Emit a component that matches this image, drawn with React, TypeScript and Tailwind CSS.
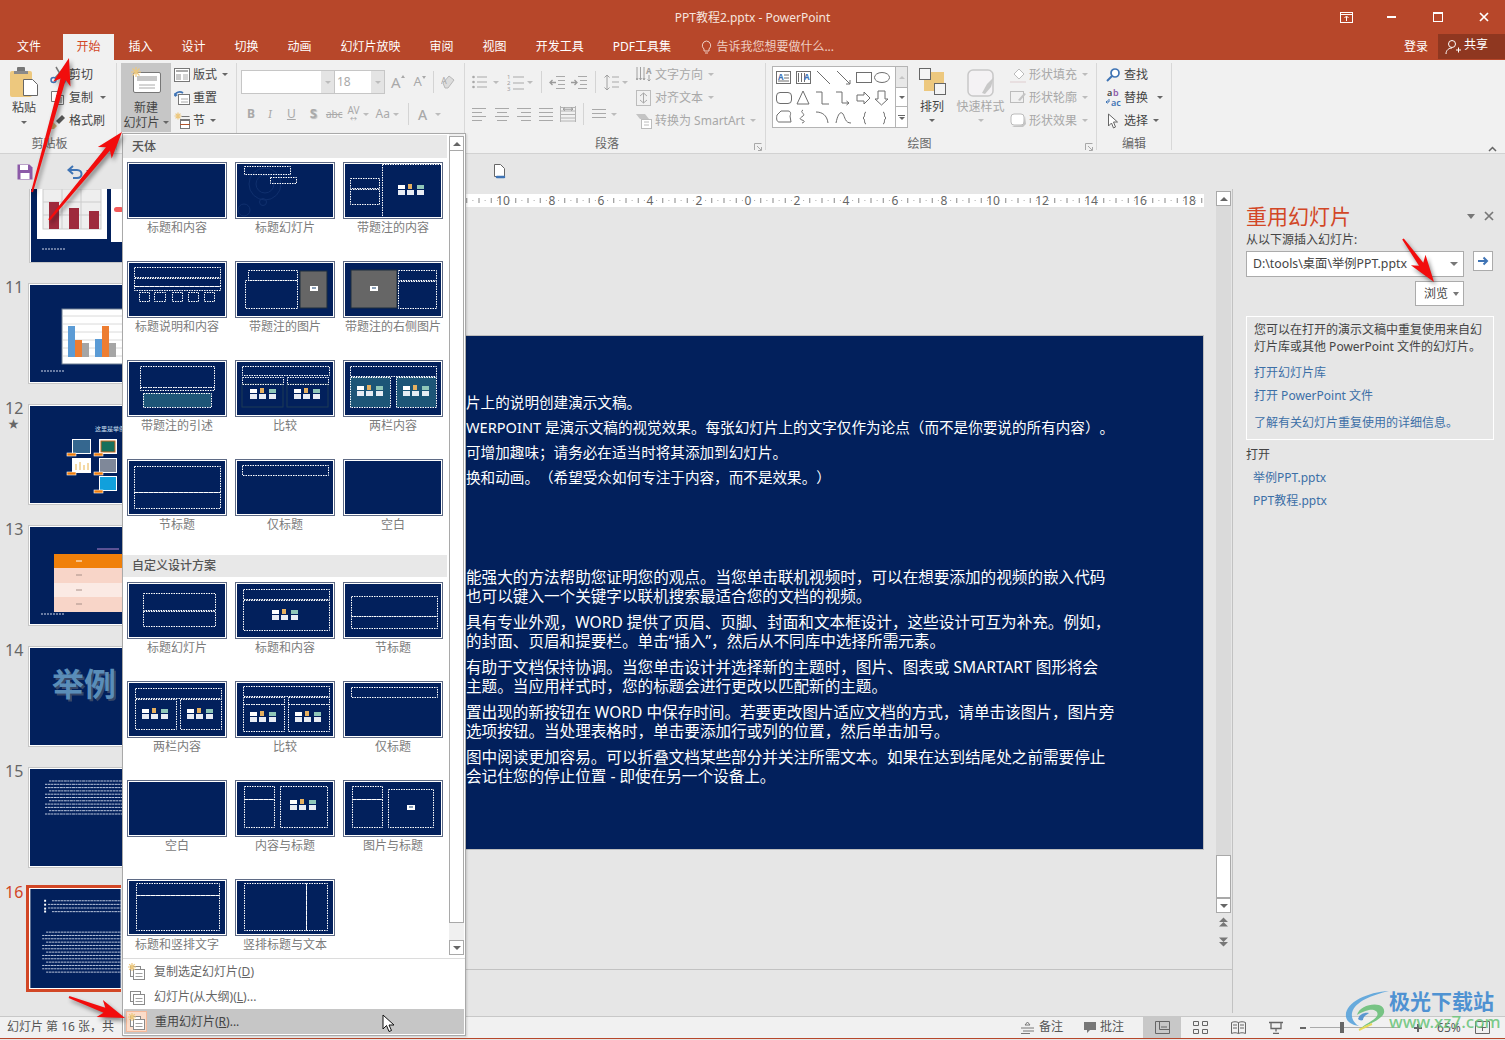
import React from "react";

const NAVY = "#02205c";

const Caret = ({ cls = "border-t-[#666]", className = "" }: { cls?: string; className?: string }) => (
  <span className={`inline-block w-0 h-0 border-x-[3px] border-x-transparent border-t-[3px] ${cls} ${className}`} />
);

const Svg = ({ w, h, children, className = "" }: { w: number; h: number; children?: React.ReactNode; className?: string }) => (
  <svg width={w} height={h} viewBox={`0 0 ${w} ${h}`} fill="none" className={`shrink-0 block ${className}`}>
    {children}
  </svg>
);

const Star = ({ x = 0, y = 0, r = 5 }: { x?: number; y?: number; r?: number }) => (
  <g stroke="#edc87e" strokeWidth="1.2">
    <path d={`M${x - r} ${y}H${x + r}M${x} ${y - r}V${y + r}M${x - r * 0.7} ${y - r * 0.7}L${x + r * 0.7} ${y + r * 0.7}M${x + r * 0.7} ${y - r * 0.7}L${x - r * 0.7} ${y + r * 0.7}`} />
  </g>
);

// text-alignment style glyph made of short strokes
const Lines = ({ w = 15, ys = [2, 6, 10, 14], xs }: { w?: number; ys?: number[]; xs?: [number, number][] }) => (
  <Svg w={w} h={16}>
    {ys.map((y, i) => (
      <rect key={i} x={xs ? xs[i][0] : 0} y={y} width={xs ? xs[i][1] : w} height="1" fill="#a9a9a9" />
    ))}
  </Svg>
);

const BulletIcon = () => (
  <Svg w={15} h={16}>
    <circle cx="1.500" cy="3" r="1.300" fill="#a9a9a9" />
    <circle cx="1.500" cy="8" r="1.300" fill="#a9a9a9" />
    <circle cx="1.500" cy="13" r="1.300" fill="#a9a9a9" />
    <path d="M5 3h10M5 8h10M5 13h10" stroke="#a9a9a9" />
  </Svg>
);

const NumberIcon = () => (
  <Svg w={17} h={18}>
    <g fontSize="6" fill="#a0a0a0">
      <text x="0" y="6">1</text>
      <text x="0" y="12">2</text>
      <text x="0" y="18">3</text>
    </g>
    <path d="M6 4h11M6 10h11M6 16h11" stroke="#a9a9a9" />
  </Svg>
);

const IndentIcon = ({ out }: { out?: boolean }) => (
  <Svg w={16} h={15}>
    <path d="M7 1.500h9M9 5.500h7M9 9.500h7M7 13.500h9M0 1.500" stroke="#a9a9a9" />
    <path d={out ? "M7 7.500H1M3.500 5L1 7.500 3.500 10" : "M0 7.500h6M3.500 5L6 7.500 3.500 10"} stroke="#9a9a9a" strokeWidth="1.300" />
  </Svg>
);

const LineSpacingIcon = () => (
  <Svg w={15} h={17}>
    <path d="M3 1v15M.5 3.500L3 1l2.500 2.500M.5 13.500L3 16l2.500-2.500" stroke="#a0a0a0" />
    <path d="M8 3h7M8 8h7M8 13h7" stroke="#a9a9a9" />
  </Svg>
);

const TextDirIcon = () => (
  <Svg w={16} h={17}>
    <path d="M1 1v13M4.500 1v13M8 1v13M.0 12l1 2 1-2M3.500 12l1 2 1-2M7 12l1 2 1-2" stroke="#a0a0a0" />
    <text x="10" y="8" fontSize="8" fontWeight="700" fill="#a0a0a0">A</text>
    <path d="M13 9v6M11.500 13.500l1.500 1.500 1.500-1.500" stroke="#a0a0a0" />
  </Svg>
);

type Rect = [number, number, number, number];
type Layout = { name: string; d?: Rect[]; solid?: Rect[]; gray?: Rect; teal?: Rect[]; pics?: [number, number][]; tiny?: [number, number]; rings?: boolean };

const PicTiles = ({ x, y }: { x: number; y: number }) => (
  <g>
    <rect x={x} y={y} width="7" height="4" fill="#fff" />
    <rect x={x + 10} y={y - 1} width="4" height="5" fill="#e6b060" />
    <rect x={x + 19} y={y} width="7" height="4" fill="#8fc6b8" />
    <rect x={x} y={y + 5} width="7" height="5" fill="#e8ecf4" />
    <rect x={x + 9} y={y + 5} width="7" height="5" fill="#e8ecf4" />
    <rect x={x + 19} y={y + 5} width="7" height="5" fill="#e8ecf4" />
  </g>
);

const LayoutThumb = ({ l }: { l: Layout }) => (
  <svg width="100" height="57" viewBox="0 0 100 57" className="block">
    <rect x="0.5" y="0.5" width="99" height="56" fill="#fff" stroke="#5f6b85" />
    <rect x="2" y="2" width="96" height="53" fill={NAVY} />
    {l.rings && (
      <g stroke="#10306e" fill="none">
        <circle cx="30" cy="22" r="16" />
        <circle cx="30" cy="22" r="9" />
        <circle cx="9" cy="48" r="6" />
        <circle cx="28" cy="40" r="3.5" />
      </g>
    )}
    {l.gray && <rect x={l.gray[0]} y={l.gray[1]} width={l.gray[2]} height={l.gray[3]} fill="#666" stroke="#1c2c3c" />}
    {l.teal?.map((r, i) => <rect key={i} x={r[0]} y={r[1]} width={r[2]} height={r[3]} fill="#1d5577" />)}
    {l.solid?.map((r, i) => <rect key={i} x={r[0]} y={r[1]} width={r[2]} height={r[3]} stroke="#1d3a55" fill="none" />)}
    {l.d?.map((r, i) => (
      <rect key={i} x={r[0] + 0.5} y={r[1] + 0.5} width={r[2]} height={r[3]} stroke="#fff" strokeDasharray="1.5 1" fill="none" />
    ))}
    {l.pics?.map((p, i) => <PicTiles key={i} x={p[0]} y={p[1]} />)}
    {l.tiny && (
      <g>
        <rect x={l.tiny[0]} y={l.tiny[1]} width="8" height="5" fill="#fff" />
        <rect x={l.tiny[0] + 2} y={l.tiny[1] + 1} width="4" height="2" fill="#8aa0b8" />
      </g>
    )}
  </svg>
);

const themeLayouts: Layout[] = [
  { name: "标题和内容" },
  { name: "标题幻灯片", d: [[9, 4, 46, 8], [35, 15, 26, 6]], rings: true },
  { name: "带题注的内容", d: [[39, 2, 59, 53], [7, 16, 29, 10], [7, 27, 29, 15]], pics: [[55, 23]] },
  { name: "标题说明和内容", d: [[7, 6, 86, 10], [7, 17, 86, 8], [7, 25, 86, 4], [12, 31, 10, 9], [27, 31, 11, 9], [45, 31, 10, 9], [61, 31, 10, 9], [77, 31, 10, 9]] },
  { name: "带题注的图片", gray: [65, 10, 27, 37], d: [[13, 9, 49, 10], [10, 19, 52, 28]], tiny: [75, 25] },
  { name: "带题注的右侧图片", gray: [8, 9, 46, 38], d: [[55, 9, 38, 10], [55, 20, 38, 27]], tiny: [27, 25] },
  { name: "带题注的引述", teal: [[16, 33, 68, 14]], d: [[13, 6, 74, 21], [13, 27, 74, 3], [16, 33, 68, 14]] },
  { name: "比较", solid: [[7, 24, 41, 23], [52, 24, 41, 23]], d: [[7, 6, 87, 9], [7, 17, 41, 7], [52, 17, 41, 7]], pics: [[15, 29], [59, 29]] },
  { name: "两栏内容", teal: [[7, 17, 40, 30], [53, 17, 40, 30]], d: [[7, 6, 86, 10], [7, 17, 40, 30], [53, 17, 40, 30]], pics: [[14, 26], [60, 26]] },
  { name: "节标题", d: [[7, 7, 86, 26], [7, 33, 86, 16]] },
  { name: "仅标题", d: [[7, 6, 86, 10]] },
  { name: "空白" },
];

const customLayouts: Layout[] = [
  { name: "标题幻灯片", d: [[16, 11, 72, 17], [16, 29, 72, 15]] },
  { name: "标题和内容", d: [[8, 7, 86, 10], [8, 18, 86, 30]], pics: [[37, 28]] },
  { name: "节标题", d: [[8, 14, 86, 20], [8, 34, 86, 12]] },
  { name: "两栏内容", d: [[8, 7, 86, 10], [8, 18, 41, 30], [53, 18, 41, 30]], pics: [[15, 28], [60, 28]] },
  { name: "比较", d: [[8, 5, 86, 10], [8, 16, 41, 7], [53, 16, 41, 7], [8, 23, 41, 27], [53, 23, 41, 27]], pics: [[15, 31], [60, 31]] },
  { name: "仅标题", d: [[8, 6, 86, 10]] },
  { name: "空白" },
  { name: "内容与标题", d: [[9, 6, 30, 13], [9, 19, 30, 28], [45, 6, 47, 41]], pics: [[55, 20]] },
  { name: "图片与标题", d: [[9, 6, 30, 13], [9, 19, 30, 28], [45, 9, 45, 38]], tiny: [64, 25] },
  { name: "标题和竖排文字", d: [[9, 4, 83, 12], [9, 16, 83, 35]] },
  { name: "竖排标题与文本", d: [[9, 4, 62, 47], [71, 4, 21, 47]] },
];

const LayoutGrid = ({ items }: { items: Layout[] }) => (
  <div className="grid grid-cols-[100px_100px_100px] gap-x-[8px] gap-y-[22px] pl-[4px]">
    {items.map((l, i) => (
      <div key={i} className="h-[77px]">
        <LayoutThumb l={l} />
        <div className="text-center text-[12px] leading-[18px] text-[#7b7b7b] whitespace-nowrap">{l.name}</div>
      </div>
    ))}
  </div>
);

const menuFooterIcon = (star: boolean) => (
  <Svg w={18} h={18}>
    <rect x="2.5" y="3.5" width="10" height="10" fill="#fff" stroke="#8a8a8a" />
    <rect x="5.5" y="6.5" width="11" height="10" fill="#fff" stroke="#8a8a8a" />
    <path d="M7.5 10.5h7M7.5 13.5h7" stroke="#a0a0a0" />
    {star && <Star x={4} y={4} r={4} />}
  </Svg>
);

const LayoutMenu = () => (
  <div className="absolute left-[122px] top-[133px] w-[344px] h-[903px] bg-white border border-[#a9a9a9] flex flex-col shadow-[1px_1px_2px_rgba(0,0,0,0.15)]">
    <div className="flex h-[824px]">
      <div className="w-[326px] pt-px">
        <div className="h-[23px] mr-[2px] bg-[#e8e8e8] text-[12px] leading-[23px] text-[#555] font-medium pl-[9px]">天体</div>
        <div className="mt-[4px]">
          <LayoutGrid items={themeLayouts} />
        </div>
        <div className="mt-[19px] h-[22px] mr-[2px] bg-[#e8e8e8] text-[12px] leading-[22px] text-[#555] font-medium pl-[9px]">自定义设计方案</div>
        <div className="mt-[5px]">
          <LayoutGrid items={customLayouts} />
        </div>
      </div>
      <div className="w-[15px] pt-[2px] flex flex-col bg-[#f0f0f0] h-[821px]">
        <div className="h-[15px] border border-[#a9a9a9] bg-white flex items-center justify-center">
          <span className="w-0 h-0 border-x-[4px] border-x-transparent border-b-[4px] border-b-[#666]" />
        </div>
        <div className="h-[772px] border-x border-b border-[#a9a9a9] bg-white" />
        <div className="h-[15px] mt-[17px] border border-[#a9a9a9] bg-white flex items-center justify-center">
          <span className="w-0 h-0 border-x-[4px] border-x-transparent border-t-[4px] border-t-[#666]" />
        </div>
      </div>
    </div>
    <div className="border-t border-[#dcdcdc] text-[12px] text-[#666]">
      <div className="h-[25px] flex items-center pl-[5px]">
        {menuFooterIcon(true)}
        <span className="ml-[8px]">复制选定幻灯片(<u>D</u>)</span>
      </div>
      <div className="h-[25px] flex items-center pl-[5px]">
        {menuFooterIcon(false)}
        <span className="ml-[8px]">幻灯片(从大纲)(<u>L</u>)...</span>
      </div>
      <div className="h-[25px] mx-px flex items-center pl-[2px] bg-[#c6c6c6] text-[#444]">
        <span className="w-[21px] h-[21px] bg-[#fbdcc9] border border-[#f4b99a] flex items-center justify-center">{menuFooterIcon(true)}</span>
        <span className="ml-[8px]">重用幻灯片(<u>R</u>)...</span>
      </div>
    </div>
  </div>
);

// ribbon row: small icon plus label
const Row = ({ icon, label, caret, off, iconW = "w-[19px]", caretMl = "ml-[5px]" }: { icon: React.ReactNode; label: string; caret?: boolean; off?: boolean; iconW?: string; caretMl?: string }) => (
  <div className={`flex items-center h-[23px] whitespace-nowrap ${off ? "text-[#a8a8a8]" : "text-[#444]"}`}>
    <span className={`${iconW} shrink-0 flex items-center`}>{icon}</span>
    <span>{label}</span>
    {caret && <Caret className={caretMl} cls={off ? "border-t-[#bcbcbc]" : "border-t-[#666]"} />}
  </div>
);

const Launcher = ({ className = "" }: { className?: string }) => (
  <Svg w={8} h={8} className={className}>
    <path d="M.5 7V.5H7.5M3 3l4 4M7.5 4v3.5H4" stroke="#a8a8a8" />
  </Svg>
);

const Group = ({ w, label, labelCls = "text-center", children, launcher }: { w: string; label?: string; labelCls?: string; children: React.ReactNode; launcher?: boolean }) => (
  <div className={`${w} h-[87px] border-r border-[#d8d8d8] shrink-0`}>
    <div className="h-[72px] flex">{children}</div>
    <div className="flex items-center h-[18px]">
      <div className={`flex-1 text-[12px] leading-[18px] text-[#666] ${labelCls}`}>{label}</div>
      {launcher && <Launcher className="mr-[3px] mt-[6px]" />}
    </div>
  </div>
);

const BlockA = ({ cls, children }: { cls: string; children: React.ReactNode }) => <span className={`text-[#a9a9a9] ${cls}`}>{children}</span>;

const ShapesGallery = () => (
  <div className="ml-[6px] mt-[3px] w-[136px] h-[62px] bg-white border border-[#b4b4b4] flex">
    <svg width="122" height="60" viewBox="0 0 122 60" fill="none" stroke="#6e6e6e" className="block shrink-0">
      <rect x="3.5" y="4.5" width="14" height="12" />
      <text x="5" y="13" fontSize="8" fontWeight="700" fill="#3f74b5" stroke="none">A</text>
      <path d="M11 8h5M11 11h5M5 14h11" />
      <rect x="23.5" y="4.5" width="14" height="12" />
      <path d="M25.500 6v9M28.500 6v9M31.500 6v9" />
      <text x="31" y="13" fontSize="8" fontWeight="700" fill="#3f74b5" stroke="none">A</text>
      <path d="M44 4l13 13M64 4l13 13M77 17v-4M77 17h-4" />
      <rect x="83.500" y="5.500" width="15" height="10" />
      <ellipse cx="109" cy="10.500" rx="7.500" ry="5" />
      <rect x="3.500" y="25.500" width="15" height="11" rx="3.500" />
      <path d="M30 24l6 13H24zM43 25h6v12h7M63 25h6v11h7M76 36l-2.500-2M76 36l-2.500 2" />
      <path d="M84 28h7v-3l6 6-6 6v-3h-7zM105 24h7v8h3l-6.500 6-6.500-6h3z" />
      <path d="M4 48l4-4h7c3 0 3 3 2 5l1 6H6c-2 0-3-3-2-7z" />
      <path d="M30 43c-4 2 3 4 0 6s-4 3-1 4 3 2 0 3" />
      <path d="M43 45c6 0 11 3 12 11M63 56c2-10 5-12 7-9s2 9 8 9" />
      <path d="M93 45c-2 0-1 4-2 5l-1 1 1 1c1 1 0 5 2 5M110 45c2 0 1 4 2 5l1 1-1 1c-1 1 0 5-2 5" />
    </svg>
    <div className="w-[12px] ml-auto flex flex-col border-l border-[#b4b4b4] text-[#888]">
      <div className="h-[20px] bg-[#e8e8e8] flex items-center justify-center">
        <span className="w-0 h-0 border-x-[3px] border-x-transparent border-b-[3px] border-b-[#c4c4c4]" />
      </div>
      <div className="h-[20px] border-y border-[#b4b4b4] flex items-center justify-center"><Caret /></div>
      <div className="h-[20px] flex flex-col items-center justify-center gap-[1px]">
        <span className="w-[7px] h-px bg-[#666]" />
        <Caret />
      </div>
    </div>
  </div>
);

const Ribbon = () => (
  <div className="h-[94px] bg-[#f1f1f1] pt-[3px] flex text-[12px] border-b border-[#d2d2d2]">
    <Group w="w-[117px]" label="剪贴板" labelCls="text-center pr-[17px]">
      <div className="w-[50px] flex flex-col items-center text-[#444] pr-[2px]">
        <Svg w={30} h={33} className="mt-[2px]">
          <rect x="1" y="6" width="22" height="26" rx="2" fill="#edc87e" />
          <rect x="8" y="2" width="8" height="6" rx="1" fill="#777" />
          <rect x="5" y="6" width="14" height="3" fill="#8a8a8a" />
          <path d="M14.500 14.500h9l5 5v11h-14z" fill="#fff" stroke="#666" />
        </Svg>
        <span className="leading-[16px] mt-[2px]">粘贴</span>
        <Caret className="mt-[5px]" />
      </div>
      <div className="flex flex-col">
        <Row icon={
          <Svg w={16} h={18}>
            <path d="M15 1L5 12M6 1l7 12" stroke="#777" strokeWidth="1.500" />
            <circle cx="3.500" cy="14" r="2.500" stroke="#3f74b5" strokeWidth="1.500" />
            <circle cx="13" cy="15" r="2" stroke="#3f74b5" strokeWidth="1.300" />
          </Svg>
        } label="剪切" />
        <Row icon={
          <Svg w={16} h={16}>
            <path d="M1.500 1.500h7v10h-7zM6.500 5.500h7v9h-7z" fill="#fff" stroke="#777" />
            <path d="M8 8h4M8 10h4M8 12h4" stroke="#777" />
          </Svg>
        } label="复制" caret caretMl="ml-[7px]" />
        <Row icon={
          <Svg w={16} h={16}>
            <path d="M3 9l4 4-3 3H1z" fill="#d8b276" />
            <path d="M6 8l6-6 3 3-6 6z" fill="#555" />
          </Svg>
        } label="格式刷" />
      </div>
    </Group>

    <Group w="w-[120px]">
      <div className="ml-[4px] w-[50px] h-[69px] bg-[#c6c6c6] flex flex-col items-center text-[#444]">
        <Svg w={32} h={28} className="mt-[3px]">
          <rect x="3.500" y="6.500" width="27" height="20" rx="1.500" fill="#fff" stroke="#777" />
          <rect x="7" y="10" width="20" height="5" fill="#c8c8c8" />
          <path d="M9 19h16M9 22h16" stroke="#aaa" />
          <Star x={6} y={6} r={5} />
        </Svg>
        <span className="leading-[15px] mt-[6px]">新建</span>
        <span className="leading-[15px] flex items-center">
          幻灯片
          <Caret className="ml-[3px]" />
        </span>
      </div>
      <div className="ml-[3px] flex flex-col">
        <Row icon={
          <Svg w={16} h={14}>
            <rect x=".5" y=".5" width="15" height="13" fill="#fff" stroke="#777" />
            <path d="M2 3h12" stroke="#aaa" strokeWidth="2" />
            <rect x="2" y="6" width="5" height="6" fill="#c8c8c8" />
            <path d="M9 7h5M9 9h5M9 11h5" stroke="#aaa" />
          </Svg>
        } label="版式" caret />
        <Row icon={
          <Svg w={16} h={15}>
            <rect x="4.500" y="4.500" width="11" height="10" fill="#fff" stroke="#777" />
            <path d="M7 9h7M7 12h7" stroke="#aaa" />
            <path d="M1 6c0-4 5-5 8-3" stroke="#3f74b5" strokeWidth="1.800" />
            <path d="M0 3l1 4 3-2z" fill="#3f74b5" />
          </Svg>
        } label="重置" />
        <Row icon={
          <Svg w={17} h={18}>
            <Star x={4} y={4} r={3.500} />
            <path d="M7.500 4.500h8M6 7.500h10" stroke="#777" />
            <rect x="6.500" y="8.500" width="9" height="8" fill="#fff" stroke="#777" />
            <path d="M6 12.500h10" stroke="#b0562e" />
          </Svg>
        } label="节" caret />
      </div>
    </Group>

    <Group w="w-[228px]">
      <div className="pl-[4px] flex flex-col">
        <div className="flex items-center h-[24px] mt-[7px]">
          <div className="w-[94px] h-[24px] bg-white border border-[#c6c6c6] flex justify-end">
            <span className="w-[13px] bg-[#e4e4e4] flex items-center justify-center"><Caret cls="border-t-[#bcbcbc]" /></span>
          </div>
          <div className="w-[50px] h-[24px] bg-white border border-l-0 border-[#c6c6c6] flex justify-between items-center pl-[2px] text-[#a9a9a9]">
            18
            <span className="w-[13px] h-[22px] bg-[#e4e4e4] flex items-center justify-center"><Caret cls="border-t-[#bcbcbc]" /></span>
          </div>
          <BlockA cls="ml-[6px] text-[15px] flex items-start">A<span className="w-0 h-0 mt-[4px] border-x-[2.5px] border-x-transparent border-b-[3px] border-b-[#a9a9a9]" /></BlockA>
          <BlockA cls="ml-[9px] text-[13px] flex items-start">A<span className="w-0 h-0 mt-[4px] border-x-[2.5px] border-x-transparent border-t-[3px] border-t-[#a9a9a9]" /></BlockA>
          <span className="ml-[7px] w-px h-[22px] bg-[#d4d4d4]" />
          <Svg w={14} h={16} className="ml-[7px]">
            <path d="M2 9l6-7 5 4-6 8H4z" fill="#dcdcdc" stroke="#b8b8b8" />
            <text x="0" y="10" fontSize="9" fill="#a9a9a9">A</text>
          </Svg>
        </div>
        <div className="flex items-center h-[24px] mt-[8px] text-[#a9a9a9]">
          <span className="ml-[6px] font-bold text-[12px]">B</span>
          <span className="ml-[13px] italic font-serif text-[12px]">I</span>
          <span className="ml-[15px] underline text-[12px]">U</span>
          <span className="ml-[14px] font-bold text-[13px] [text-shadow:1px_1px_1px_#bbb]">S</span>
          <span className="ml-[9px] text-[10px] line-through">abc</span>
          <span className="ml-[5px] text-[10px] leading-[9px] flex flex-col items-center"><span>AV</span><span className="text-[7px] leading-[7px]">↔</span></span>
          <Caret cls="border-t-[#bcbcbc]" className="ml-[4px]" />
          <span className="ml-[6px] text-[12px]">Aa</span>
          <Caret cls="border-t-[#bcbcbc]" className="ml-[3px]" />
          <span className="ml-[9px] w-px h-[22px] bg-[#d4d4d4]" />
          <span className="ml-[9px] text-[14px] font-medium">A</span>
          <Caret cls="border-t-[#bcbcbc]" className="ml-[8px]" />
        </div>
      </div>
    </Group>

    <Group w="w-[301px]" label="段落" labelCls="text-center pr-[5px]" launcher>
      <div className="pl-[7px] flex flex-col">
        <div className="flex items-center h-[24px] mt-[7px]">
          <BulletIcon />
          <Caret cls="border-t-[#bcbcbc]" className="ml-[6px]" />
          <span className="ml-[8px]"><NumberIcon /></span>
          <Caret cls="border-t-[#bcbcbc]" className="ml-[3px]" />
          <span className="ml-[8px] w-px h-[22px] bg-[#d4d4d4]" />
          <span className="ml-[7px]"><IndentIcon out /></span>
          <span className="ml-[6px]"><IndentIcon /></span>
          <span className="ml-[8px] w-px h-[22px] bg-[#d4d4d4]" />
          <span className="ml-[8px]"><LineSpacingIcon /></span>
          <Caret cls="border-t-[#bcbcbc]" className="ml-[3px]" />
        </div>
        <div className="flex items-center h-[24px] mt-[8px]">
          <Lines w={15} xs={[[0, 14], [0, 10], [0, 14], [0, 10]]} />
          <span className="ml-[8px]"><Lines w={14} xs={[[0, 14], [2, 10], [0, 14], [2, 10]]} /></span>
          <span className="ml-[8px]"><Lines w={14} xs={[[0, 14], [4, 10], [0, 14], [4, 10]]} /></span>
          <span className="ml-[8px]"><Lines w={14} /></span>
          <Svg w={16} h={16} className="ml-[7px]">
            <path d="M.5 0v16M15.500 0v16M0 1.500h16M0 5h16M0 8.500h16M0 12h16M0 15h16" stroke="#b4b4b4" />
            <path d="M3 3.200h10M3 3.200l2-1.500M3 3.200l2 1.500M13 3.200l-2-1.500M13 3.200l-2 1.500" stroke="#999" />
          </Svg>
          <span className="ml-[7px] w-px h-[22px] bg-[#d4d4d4]" />
          <span className="ml-[8px]"><Lines w={14} ys={[3, 7, 11]} xs={[[0, 14], [0, 14], [0, 14]]} /></span>
          <Caret cls="border-t-[#bcbcbc]" className="ml-[5px]" />
        </div>
      </div>
      <div className="ml-auto w-[129px] flex flex-col">
        <Row off icon={<TextDirIcon />} label="文字方向" caret />
        <Row off icon={
          <Svg w={15} h={16}><rect x=".5" y=".5" width="14" height="15" stroke="#bcbcbc" /><path d="M7.500 3v10M4 6l3.500-3L11 6M4 10l3.500 3L11 10" stroke="#a9a9a9" /></Svg>
        } label="对齐文本" caret />
        <Row off icon={
          <Svg w={16} h={16}><path d="M0 1h9l4 5H4z" fill="#c4c4c4" /><rect x="5.500" y="6.500" width="10" height="9" fill="#fff" stroke="#bcbcbc" /><path d="M8 9h5M8 12h5" stroke="#bcbcbc" /></Svg>
        } label="转换为 SmartArt" caret />
      </div>
    </Group>

    <Group w="w-[331px]" label="绘图" labelCls="text-center pr-[12px]" launcher>
      <ShapesGallery />
      <div className="ml-[9px] w-[30px] flex flex-col items-center text-[#444]">
        <Svg w={27} h={27} className="mt-[5px]">
          <rect x="5" y="4" width="20" height="19" fill="#edc87e" />
          <rect x=".5" y=".5" width="11" height="11" fill="#f4f4f4" stroke="#666" />
          <rect x="15.500" y="15.500" width="11" height="11" fill="#f4f4f4" stroke="#666" />
        </Svg>
        <span className="leading-[16px] mt-[4px]">排列</span>
        <Caret className="mt-[4px]" />
      </div>
      <div className="ml-[9px] w-[49px] flex flex-col items-center text-[#a8a8a8]">
        <Svg w={28} h={29} className="mt-[6px]">
          <rect x="1" y="1" width="25" height="26" rx="5" fill="#f4f2f4" stroke="#c8c8c8" strokeWidth="1.500" />
          <path d="M15 24l5-9 7-7-3 10-6 7z" fill="#c8c8c8" />
        </Svg>
        <span className="leading-[16px] mt-[1px]">快速样式</span>
        <Caret cls="border-t-[#bcbcbc]" className="mt-[4px]" />
      </div>
      <div className="ml-[5px] flex flex-col">
        <Row off icon={
          <Svg w={16} h={16}><path d="M4 7l5-5 5 5-5 5z" stroke="#bcbcbc" fill="#fff" /><rect x="0" y="14" width="16" height="2" fill="#e8dfe0" /></Svg>
        } label="形状填充" caret />
        <Row off icon={
          <Svg w={16} h={15}><rect x=".5" y="1.500" width="13" height="11" stroke="#bcbcbc" /><path d="M8 10l6-7 2 1-6 7z" fill="#c4c4c4" /></Svg>
        } label="形状轮廓" caret />
        <Row off icon={
          <Svg w={16} h={15}><rect x="1" y="1" width="13" height="11" rx="3" fill="#fff" stroke="#bbb" /><path d="M2 13l11-1 2-9 1 8-3 3H4z" fill="#c4c4c4" /></Svg>
        } label="形状效果" caret />
      </div>
    </Group>

    <Group w="w-[75px]" label="编辑">
      <div className="ml-[9px] flex flex-col">
        <Row iconW="w-[18px]" icon={
          <Svg w={14} h={14}><circle cx="9" cy="5" r="4" stroke="#3f74b5" strokeWidth="1.700" fill="#fff" /><path d="M6 8l-5 5" stroke="#3f74b5" strokeWidth="2" /></Svg>
        } label="查找" />
        <Row iconW="w-[18px]" icon={
          <Svg w={17} h={20}>
            <g fontSize="9" fontWeight="600">
              <text x="1" y="8" fill="#444">a</text>
              <text x="7" y="8" fill="#8e5aa8">b</text>
              <text x="5" y="18" fill="#3f74b5">ac</text>
            </g>
            <path d="M3 11v3H0M1.500 12.500L0 14l1.500 1.500" stroke="#3f74b5" />
          </Svg>
        } label="替换" caret caretMl="ml-[9px]" />
        <Row iconW="w-[18px]" icon={
          <Svg w={13} h={16}><path d="M2.500 1v12l3-3 2 5 2-1-2-5h4z" fill="#fff" stroke="#666" /></Svg>
        } label="选择" caret />
      </div>
    </Group>

    <div className="ml-auto mr-[8px] mt-[83px]">
      <Svg w={9} h={6}><path d="M1 5l3.500-3.500L8 5" stroke="#666" strokeWidth="1.500" /></Svg>
    </div>
  </div>
);

const tabs = ["插入", "设计", "切换", "动画", "幻灯片放映", "审阅", "视图", "开发工具", "PDF工具集"];

const TopBars = () => (
  <div className="bg-[#b7472a] text-white text-[12px]">
    <div className="h-[34px] flex items-center">
      <div className="flex-1 text-center text-[#f6e4de] pl-[165px] pt-px">PPT教程2.pptx - PowerPoint</div>
      <div className="flex items-center pr-[16px]">
        <Svg w={13} h={11}>
          <rect x=".5" y=".5" width="12" height="10" stroke="#fff" />
          <path d="M1 2.500h11" stroke="#fff" />
          <path d="M6.500 9V4.500M4.500 6l2-2 2 2" stroke="#fff" />
        </Svg>
        <span className="ml-[34px] w-[9px] h-[2px] bg-white" />
        <span className="ml-[37px] w-[10px] h-[10px] border border-white border-t-2" />
        <Svg w={10} h={10} className="ml-[36px]"><path d="M1 1l8 8M9 1L1 9" stroke="#fff" strokeWidth="1.700" /></Svg>
      </div>
    </div>
    <div className="h-[26px] flex items-stretch pl-[2.5px]">
      <div className="px-[14.5px] leading-[26px] mr-[7.5px]">文件</div>
      <div className="w-[51px] text-center bg-[#f1f1f1] text-[#d24726] leading-[26px]">开始</div>
      {tabs.map((t) => (
        <div key={t} className="px-[14.5px] leading-[26px] whitespace-nowrap">{t}</div>
      ))}
      <div className="flex items-center ml-[16px] text-[#eecdc2]">
        <Svg w={11} h={15}>
          <path d="M5.500 1a4.500 4.500 0 0 0-2.500 8v2h5V9a4.500 4.500 0 0 0-2.500-8zM4 13h3" stroke="#eecdc2" />
        </Svg>
        <span className="ml-[4px]">告诉我您想要做什么...</span>
      </div>
      <div className="ml-auto leading-[26px] mr-[10px]">登录</div>
      <div className="w-[67px] h-[25px] bg-[#8f3720] flex items-center pl-[7px]">
        <Svg w={16} h={16}>
          <circle cx="7" cy="5" r="3.500" stroke="#fff" />
          <path d="M1 15c0-4 3-6 6-6M11 11h5M13.500 8.500v5" stroke="#fff" />
        </Svg>
        <span className="ml-[3px] -mt-[3px]">共享</span>
      </div>
    </div>
  </div>
);

const TextLines = ({ x, y, w, n, gap }: { x: number; y: number; w: number; n: number; gap: number }) => (
  <g stroke="#dfe6f4" strokeWidth="1" strokeDasharray="2 .6 3 .5" opacity=".85">
    {Array.from({ length: n }).map((_, i) => (
      <path key={i} d={`M${x + (i % 3 === 0 ? 4 : 0)} ${y + i * gap}h${w}`} />
    ))}
  </g>
);

const Thumb = ({ num, star, h = 97, active, children }: { num: number; star?: boolean; h?: number; active?: boolean; children: React.ReactNode }) => (
  <div className="flex">
    <div className={`w-[26px] pl-[5px] text-[16px] leading-[18px] -mt-[5px] ${active ? "text-[#d24726]" : "text-[#666]"}`}>
      {num}
      {star && <div className="text-[11px] leading-[12px] pl-[3px] mt-px">★</div>}
    </div>
    <div className={active ? "border-[3px] border-r-0 border-[#d24726] -mt-[3px] -mb-[3px] h-[107px]" : "ml-[3px] border-y border-l border-[#c6c6c6] bg-white pl-px py-px"}>
      <svg width={92} height={h} viewBox={`0 0 92 ${h}`} className={active ? "block border border-r-0 border-white" : "block"}>
        <rect width="92" height={h} fill={NAVY} />
        {children}
      </svg>
    </div>
  </div>
);

const ThumbPane = () => (
  <div className="w-[122px] h-full overflow-hidden shrink-0">
    <div className="flex h-[74px] mb-[20px]">
      <div className="ml-[29px] border-b border-l border-[#c6c6c6] bg-white pl-px pb-px">
        <svg width="92" height="73" viewBox="0 0 92 73" className="block">
          <rect width="92" height="73" fill={NAVY} />
          <rect x="6" y="0" width="70" height="50" fill="#fff" />
          <rect x="12" y="0" width="58" height="40" fill="#eee" stroke="#ccc" />
          <path d="M12 13h58M12 26h58M31 0v40M50 0v40" stroke="#ccc" />
          <rect x="18" y="13" width="10" height="27" fill="#9e2a3c" />
          <rect x="38" y="19" width="10" height="21" fill="#9e2a3c" />
          <rect x="58" y="22" width="10" height="18" fill="#9e2a3c" />
          <rect x="80" y="0" width="12" height="53" fill="#fff" />
          <rect x="83" y="18" width="9" height="5" rx="2.500" fill="#f25a5a" />
          <path d="M11 60h23" stroke="#cfd6ea" strokeDasharray="2 1" />
        </svg>
      </div>
    </div>
    <div className="flex flex-col gap-[20px]">
      <Thumb num={11}>
        <rect x="32" y="24" width="70" height="55" fill="#fff" stroke="#6d7d90" />
        <path d="M33 31h60M33 39h60M33 47h60M33 55h60M33 63h60M33 71h60" stroke="#dadada" />
        <rect x="38" y="41" width="7" height="31" fill="#5b9bd5" />
        <rect x="45" y="55" width="7" height="17" fill="#ed7d31" />
        <rect x="52" y="58" width="7" height="14" fill="#a5a5a5" />
        <rect x="65" y="54" width="7" height="18" fill="#5b9bd5" />
        <rect x="72" y="41" width="7" height="31" fill="#ed7d31" />
        <rect x="79" y="58" width="7" height="14" fill="#a5a5a5" />
        <path d="M11 86h23" stroke="#cfd6ea" strokeDasharray="2 1" />
      </Thumb>
      <Thumb num={12} star>
        <text x="65" y="25" fontSize="6" fill="#cfe0f4">这里是举例</text>
        <rect x="42" y="33" width="19" height="15" fill="#fff" />
        <rect x="43" y="34" width="17" height="13" fill="#35678f" />
        <rect x="69" y="33" width="18" height="15" fill="#fff" />
        <rect x="71" y="35" width="14" height="11" fill="#17705c" stroke="#c9661d" />
        <rect x="42" y="52" width="19" height="15" fill="#fff" />
        <path d="M46 64v-6M50 64v-8M54 64v-5M58 64v-7" stroke="#e9b44c" />
        <rect x="69" y="52" width="18" height="15" fill="#fff" />
        <rect x="70" y="53" width="16" height="13" fill="#7f8899" />
        <rect x="69" y="70" width="18" height="15" fill="#fff" />
        <rect x="70" y="71" width="16" height="13" fill="#11a0dc" />
        <rect x="37" y="47" width="9" height="3" fill="#f07c0a" stroke="#fff" strokeWidth=".6" />
        <rect x="64" y="47" width="9" height="3" fill="#f07c0a" stroke="#fff" strokeWidth=".6" />
        <rect x="37" y="66" width="9" height="3" fill="#f07c0a" stroke="#fff" strokeWidth=".6" />
        <rect x="64" y="66" width="9" height="3" fill="#f07c0a" stroke="#fff" strokeWidth=".6" />
        <rect x="64" y="84" width="9" height="3" fill="#f07c0a" stroke="#fff" strokeWidth=".6" />
      </Thumb>
      <Thumb num={13}>
        <path d="M67 22h22" stroke="#7a63a8" strokeWidth="1.500" />
        <rect x="24" y="27" width="68" height="14" fill="#f0800a" />
        <rect x="24" y="41" width="68" height="15" fill="#f8d5c8" />
        <rect x="24" y="56" width="68" height="14" fill="#fbeae4" />
        <rect x="24" y="70" width="68" height="15" fill="#f8d5c8" />
        <path d="M46 34h6" stroke="#fff" />
        <path d="M46 48h6M46 63h6M46 77h6" stroke="#a89088" />
        <path d="M11 87h23" stroke="#cfd6ea" strokeDasharray="2 1" />
      </Thumb>
      <Thumb num={14}>
        <text x="24" y="50" fontSize="32" fontWeight="700" fill="#777" opacity=".45">举例</text>
        <text x="22" y="48" fontSize="32" fontWeight="700" fill="#5a8db8">举例</text>
      </Thumb>
      <Thumb num={15}>
        <TextLines x={15} y={12} w={77} n={11} gap={3.300} />
      </Thumb>
      <Thumb num={16} active h={101}>
        <g fill="#fff">
          <rect x="14" y="11" width="2" height="2" />
          <rect x="14" y="15" width="2" height="2" />
          <rect x="14" y="19" width="2" height="2" />
          <rect x="14" y="22" width="2" height="2" />
        </g>
        <TextLines x={18} y={12} w={74} n={4} gap={3.700} />
        <TextLines x={12} y={44} w={80} n={13} gap={3.400} />
      </Thumb>
    </div>
  </div>
);

const Ruler = () => {
  const ticks = Array.from({ length: 149 }, (_, i) => i - 74);
  return (
    <svg width="914" height="13" viewBox="0 0 914 13" className="block bg-white">
      {ticks.map((k) => {
        const x = 458 + k * 6.125;
        if (k % 8 === 0) {
          return (
            <text key={k} x={x} y="11" fontSize="12" fill="#666" textAnchor="middle">
              {Math.abs(k / 4)}
            </text>
          );
        }
        return k % 2 === 0 ? <rect key={k} x={x} y="4" width="1" height="5" fill="#888" /> : <rect key={k} x={x} y="6" width="1" height="1" fill="#aaa" />;
      })}
    </svg>
  );
};

const slideTop = [
  "片上的说明创建演示文稿。",
  "WERPOINT 是演示文稿的视觉效果。每张幻灯片上的文字仅作为论点（而不是你要说的所有内容）。",
  "可增加趣味；请务必在适当时将其添加到幻灯片。",
  "换和动画。（希望受众如何专注于内容，而不是效果。）",
];

const slideBody = [
  ["能强大的方法帮助您证明您的观点。当您单击联机视频时，可以在想要添加的视频的嵌入代码", "也可以键入一个关键字以联机搜索最适合您的文档的视频。"],
  ["具有专业外观，WORD 提供了页眉、页脚、封面和文本框设计，这些设计可互为补充。例如，", "的封面、页眉和提要栏。单击“插入”，然后从不同库中选择所需元素。"],
  ["有助于文档保持协调。当您单击设计并选择新的主题时，图片、图表或 SMARTART 图形将会", "主题。当应用样式时，您的标题会进行更改以匹配新的主题。"],
  ["置出现的新按钮在 WORD 中保存时间。若要更改图片适应文档的方式，请单击该图片，图片旁", "选项按钮。当处理表格时，单击要添加行或列的位置，然后单击加号。"],
  ["图中阅读更加容易。可以折叠文档某些部分并关注所需文本。如果在达到结尾处之前需要停止", "会记住您的停止位置 - 即使在另一个设备上。"],
];

const Slide = () => (
  <div className="mt-[128px] w-[914px] h-[515px] bg-[#02205c] border-t border-r border-b border-[#bdbdbd] pt-[57px] pl-[176px] text-white text-[14.6px] leading-[19.5px] whitespace-nowrap">
    {slideTop.map((t) => (
      <p key={t} className="mb-[5.5px]">{t}</p>
    ))}
    <div className="mt-[80px] text-[15.6px]">
      {slideBody.map((p) => (
        <div key={p[0]} className="mb-[6px]">
          <p>{p[0]}</p>
          <p>{p[1]}</p>
        </div>
      ))}
    </div>
  </div>
);

const Editor = () => (
  <div className="flex-1 flex flex-col">
    <div className="h-[780px] flex">
      <div className="pl-[168px] pt-[5px] w-[1094px]">
        <Ruler />
        <Slide />
      </div>
      <div className="w-[15px] pt-[2px] flex flex-col items-stretch">
        <div className="h-[722px] bg-[#dadada] flex flex-col">
          <div className="h-[15px] bg-white border border-[#a9a9a9] flex items-center justify-center">
            <span className="w-0 h-0 border-x-[4px] border-x-transparent border-b-[4px] border-b-[#666]" />
          </div>
          <div className="mt-auto h-[43px] bg-white border border-[#a9a9a9]" />
          <div className="h-[15px] bg-white border border-[#a9a9a9] flex items-center justify-center">
            <span className="w-0 h-0 border-x-[4px] border-x-transparent border-t-[4px] border-t-[#666]" />
          </div>
        </div>
        <Svg w={15} h={32} className="mt-[3px]">
          <path d="M3 5h9M7.500 6L3 10.500h9zM7.500 1.500L3 6h9z" fill="#777" />
          <path d="M3 27h9M7.500 26L3 21.500h9zM7.500 30.500L3 26h9z" fill="#777" />
        </Svg>
      </div>
    </div>
    <div className="flex-1 border-t border-[#c2c2c2]" />
  </div>
);

const TaskPane = () => (
  <div className="w-[273px] h-[824px] shrink-0 border-l border-[#c2c2c2] pl-[13px] text-[12px] text-[#444]">
    <div className="flex items-center h-[28px] mt-[13px]">
      <span className="text-[#d24726] text-[21px] leading-[28px]">重用幻灯片</span>
      <Caret cls="border-t-[#777]" className="ml-[116px] border-x-[4px] border-t-[5px]" />
      <Svg w={10} h={10} className="ml-[9px]"><path d="M1 1l8 8M9 1L1 9" stroke="#777" strokeWidth="1.700" /></Svg>
    </div>
    <div className="leading-[17px] mt-[1px]">从以下源插入幻灯片:</div>
    <div className="flex mt-[3px] items-start">
      <div className="w-[218px] h-[26px] bg-white border border-[#ababab] flex items-center pl-[6px] pr-[5px] text-[12.3px]">
        D:\tools\桌面\举例PPT.pptx
        <Caret cls="border-t-[#777]" className="ml-auto border-x-[4px] border-t-[4px]" />
      </div>
      <div className="ml-[9px] w-[20px] h-[20px] bg-white border border-[#ababab] flex items-center justify-center">
        <Svg w={12} h={10}><path d="M1 5h9M6.500 1.500L10 5 6.500 8.500" stroke="#3f74b5" strokeWidth="2" /></Svg>
      </div>
    </div>
    <div className="flex justify-end w-[218px] mt-[4px]">
      <div className="w-[49px] h-[25px] bg-white border border-[#ababab] flex items-center pl-[8px] gap-[5px]">
        浏览
        <Caret cls="border-t-[#777]" className="border-x-[3.5px] border-t-[4px]" />
      </div>
    </div>
    <div className="w-[248px] h-[124px] mt-[10px] border border-white px-[7px] pt-[4px]">
      <p className="leading-[17px] whitespace-nowrap">您可以在打开的演示文稿中重复使用来自幻</p>
      <p className="leading-[17px] whitespace-nowrap">灯片库或其他 PowerPoint 文件的幻灯片。</p>
      <div className="text-[#3c6fa6] leading-[23px] mt-[6px]">
        <p>打开幻灯片库</p>
        <p>打开 PowerPoint 文件</p>
        <p className="mt-[4px]">了解有关幻灯片重复使用的详细信息。</p>
      </div>
    </div>
    <div className="leading-[18px] mt-[6px]">打开</div>
    <div className="text-[#3c6fa6] pl-[7px] mt-[2px] leading-[23px]">
      <p>举例PPT.pptx</p>
      <p>PPT教程.pptx</p>
    </div>
  </div>
);

const StatusBar = () => (
  <div className="h-[22px] border-t border-[#c8c8c8] bg-[#f1f1f1] flex items-center text-[12px] text-[#555]">
    <span className="pl-[7px] -mt-[2px]">幻灯片 第 16 张，共</span>
    <div className="ml-auto w-[484px] flex items-center h-full">
      <Svg w={13} h={13}><path d="M4 4l2.500-3L9 4zM0 7h13M2 10h11M0 12.500h9" stroke="#777" /></Svg>
      <span className="ml-[5px] -mt-[2px]">备注</span>
      <Svg w={13} h={13} className="ml-[21px]"><path d="M0 1h12v8H6l-3 3V9H0z" fill="#777" /></Svg>
      <span className="ml-[3px] -mt-[2px]">批注</span>
      <span className="ml-[19px] w-[38px] h-full bg-[#c8c8c8] flex items-center justify-center">
        <Svg w={15} h={13}><path d="M.5.500h14v12H.500zM4.500.500v8h10M6 6h6" stroke="#666" /></Svg>
      </span>
      <span className="w-[38px] flex justify-center">
        <Svg w={15} h={13}><path d="M.5.500h5v4h-5zM9.500.500h5v4h-5zM.5 8.500h5v4h-5zM9.500 8.500h5v4h-5z" stroke="#666" /></Svg>
      </span>
      <span className="w-[38px] flex justify-center">
        <Svg w={15} h={13}><path d="M.5 1.500c2-1 5-1 7 0 2-1 5-1 7 0v11c-2-1-5-1-7 0-2-1-5-1-7 0zM7.500 1.500v11M2 4h4M2 7h4M9 4h4M9 7h4" stroke="#666" /></Svg>
      </span>
      <span className="w-[38px] flex justify-center">
        <Svg w={14} h={13}><path d="M0 1.500h14M2 1.500v6h10v-6M7 7.500v3M4 12.500h6" stroke="#666" strokeWidth="1.300" /></Svg>
      </span>
      <Svg w={124} h={13} className="ml-[5px]">
        <path d="M0 7h6" stroke="#666" strokeWidth="2" />
        <path d="M10 6.500h90" stroke="#aaa" />
        <rect x="40" y="1" width="4" height="11" fill="#666" />
        <path d="M118 3v8M114 7h8" stroke="#666" strokeWidth="2" />
      </Svg>
      <span className="ml-[13px]">65%</span>
      <Svg w={15} h={13} className="ml-[14px]"><path d="M.5.500h14v12H.500zM4 6.500h7M7.500 3v7" stroke="#666" /></Svg>
    </div>
  </div>
);

// annotation arrow, start to tip in page pixels
const arrowPoints = (x1: number, y1: number, x2: number, y2: number) => {
  const len = Math.hypot(x2 - x1, y2 - y1);
  const ux = (x2 - x1) / len;
  const uy = (y2 - y1) / len;
  const at = (along: number, side: number) => `${x1 + ux * along - uy * side},${y1 + uy * along + ux * side}`;
  const b = len - 22;
  return [at(0, -1), at(b, -2.6), at(b - 5, -9), at(len, 0), at(b - 5, 9), at(b, 2.6), at(0, 1)].join(" ");
};

const Arrows = () => (
  <svg width="1505" height="1040" viewBox="0 0 1505 1040" className="absolute left-0 top-0 pointer-events-none drop-shadow-[2px_3px_2px_rgba(0,0,0,0.45)]">
    <g fill="#f20d0d">
      <polygon points={arrowPoints(32, 192, 69, 58)} />
      <polygon points={arrowPoints(49, 220, 122, 132)} />
      <polygon points={arrowPoints(1403, 239, 1434, 282)} />
      <polygon points={arrowPoints(69, 997, 125, 1018)} />
    </g>
  </svg>
);

const Watermark = () => (
  <div className="absolute left-[1345px] top-[989px] flex pointer-events-none">
    <svg width="46" height="42" viewBox="0 0 46 42" fill="none" className="block opacity-90">
      <path d="M1 28C-1 14 22 3 44 2 28 6 10 12 7 24c-1 6 3 11 7 13C7 36 2 33 1 28z" fill="#5aa4dc" />
      <path d="M12 26c2-8 14-12 22-10 6 2 7 8 2 12-5 5-15 8-22 13 5-6 15-9 18-14 2-4-2-7-8-6-5 1-9 3-12 5z" fill="#6bc07a" />
      <path d="M13 30c1-4 6-7 11-6-3 2-6 4-6 7-2 1-4 0-5-1z" fill="#4d8fce" />
      <path d="M14 41c4-2 8-4 13-6" stroke="#e8d84c" strokeWidth="2" />
    </svg>
    <div className="ml-[-2px] -mt-[1px]">
      <div className="text-[21px] leading-[26px] font-bold text-[#4f92d2] whitespace-nowrap">极光下载站</div>
      <div className="text-[17px] leading-[15px] font-medium text-[#6cc57c]/90 whitespace-nowrap">www.xz7.com</div>
    </div>
  </div>
);

export default function App() {
  return (
    <div className="relative w-[1505px] h-[1040px] overflow-hidden flex flex-col bg-[#e6e6e6] font-['Noto_Sans','Noto_Sans_CJK_SC',sans-serif] [text-spacing-trim:space-all]">
      <TopBars />
      <Ribbon />
      <div className="h-[35px] flex items-center text-[#777] shrink-0">
        <Svg w={16} h={16} className="ml-[17px]">
          <path d="M.5.500h12l3 3v12H.500z" fill="#8c5aa8" />
          <rect x="3" y="1" width="8" height="5" fill="#fff" />
          <rect x="3.500" y="9" width="9" height="6" fill="#fff" />
        </Svg>
        <Svg w={16} h={14} className="ml-[34px]">
          <path d="M2 5h8c6 0 6 8 0 8H6" stroke="#3f74b5" strokeWidth="2" />
          <path d="M6 1L1.500 5 6 9" stroke="#3f74b5" strokeWidth="2" />
        </Svg>
        <Caret className="ml-[3px]" />
        <Svg w={14} h={16} className="ml-[401px]">
          <path d="M1.500.500h6l4 4v8h-10z" fill="#fff" stroke="#666" />
          <path d="M4 13h3M8 13h3" stroke="#3f74b5" strokeWidth="2.500" strokeLinecap="round" />
        </Svg>
      </div>
      <div className="flex h-[827px] shrink-0">
        <ThumbPane />
        <Editor />
        <TaskPane />
      </div>
      <StatusBar />
      <div className="h-px bg-[#b7472a]" />
      <LayoutMenu />
      <Arrows />
      <Svg w={14} h={19} className="absolute left-[382px] top-[1014px]">
        <path d="M1 1v14l3.500-3.500L7 17.500l2.500-1L7 11h5z" fill="#fff" stroke="#111" />
      </Svg>
      <Watermark />
    </div>
  );
}
